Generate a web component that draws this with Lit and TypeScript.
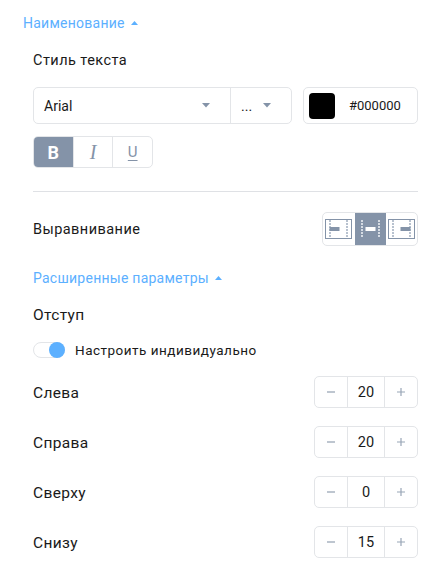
import { LitElement, html, css, svg } from "lit";
import { customElement } from "lit/decorators.js";

const caret = html`<svg class="caret" width="8" height="5" viewBox="0 0 8 5"><path d="M0 0h8L4 4.5z" fill="#8493a8"/></svg>`;
const up = html`<svg class="up" width="7" height="4" viewBox="0 0 7 4"><path d="M0 4h7L3.5 0z" fill="#5cb0ff"/></svg>`;
const minus = html`<svg width="8" height="8" viewBox="0 0 8 8"><path d="M0 4h8" stroke="#a9b3c1" stroke-width="1.500"/></svg>`;
const plus = html`<svg width="8" height="8" viewBox="0 0 8 8"><path d="M0 4h8M4 0v8" stroke="#98a5b6" stroke-width="1.200"/></svg>`;

function alignIcon(pos: "l" | "c" | "r", active: boolean) {
  const c = active ? "#ffffff" : "#8493a8";
  const d = active ? "#d5dbe3" : "#b8c2cf";
  const x = pos === "l" ? 4.5 : pos === "c" ? 8.5 : 12.5;
  const frame = active
    ? null
    : svg`<rect x="0.5" y="0.5" width="26" height="19" fill="none" stroke="#8493a8" stroke-width="1"/>`;
  return html`<svg width="27" height="20" viewBox="0 0 27 20">
    ${frame}
    <path d="M5 1v18M22 1v18" stroke="${d}" stroke-width="2" stroke-dasharray="2 1" fill="none"/>
    <rect x="${x}" y="8" width="10" height="4" fill="${c}"/>
  </svg>`;
}

@customElement("app-root")
export class AppRoot extends LitElement {
  static styles = css`
    :host {
      display: block;
      width: 447px;
      height: 575px;
      overflow: hidden;
      background: #fff;
      font-family: Roboto, "Liberation Sans", sans-serif;
      font-size: 14px;
      color: #1a1a1a;
      box-sizing: border-box;
    }
    .link {
      display: flex;
      align-items: center;
      gap: 6px;
      color: #5cb0ff;
      font-size: 14px;
      letter-spacing: 0.25px;
      line-height: 16px;
    }
    .head { padding: 15px 0 0 23px; }
    .body { padding: 0 29px 0 33px; }
    .title { font-size: 14.500px; letter-spacing: 0.45px; line-height: 18px; }
    .big { font-size: 15.500px; letter-spacing: 0.35px; }
    .style-title { margin-top: 21px; }
    .fontrow { display: flex; gap: 11px; margin-top: 17px; }
    .group {
      display: flex;
      border: 1px solid #e3e5e8;
      border-radius: 5px;
      box-sizing: border-box;
      background: #fff;
    }
    .selects { width: 259px; height: 37px; }
    .sel {
      display: flex;
      align-items: center;
      justify-content: space-between;
      box-sizing: border-box;
      padding: 0 20px 0 10px;
    }
    .sel.a { width: 197px; border-right: 1px solid #e3e5e8; }
    .sel.b { flex: 1; }
    .color { width: 115px; height: 37px; align-items: center; padding-left: 5px; gap: 14px; font-size: 13px; }
    .swatch { width: 26px; height: 26px; border-radius: 4px; background: #000; }
    .fmt { width: 120px; height: 32px; margin-top: 12px; overflow: hidden; }
    .fmt div {
      flex: 1;
      display: flex;
      align-items: center;
      justify-content: center;
      color: #8493a8;
      font-size: 18px;
    }
    .fmt div + div { border-left: 1px solid #e3e5e8; }
    .fmt .on { background: #8493a8; color: #fff; font-weight: 700; }
    .fmt .i { font-style: italic; font-family: "Liberation Serif", serif; font-size: 20px; }
    .fmt .u { text-decoration: underline; font-size: 15px; text-underline-offset: 3px; }
    .divider { height: 1px; background: #dfe1e5; margin-top: 23px; }
    .row { display: flex; align-items: center; justify-content: space-between; }
    .alignrow { margin-top: 20px; }
    .align { width: 96px; height: 34px; overflow: hidden; }
    .align div { flex: 1; display: flex; align-items: center; justify-content: center; }
    .align .on { background: #8493a8; flex: 0 0 31px; }
    .adv { margin-top: 24px; }
    .offset { margin-top: 20px; }
    .toggle-row { display: flex; align-items: center; gap: 10px; margin-top: 18px; font-size: 13.500px; letter-spacing: 0.5px; height: 16px; }
    .switch { position: relative; width: 32px; height: 16px; border: 1px solid #e3e5e8; border-radius: 9px; box-sizing: border-box; }
    .knob { position: absolute; right: -1px; top: -1px; width: 16px; height: 16px; border-radius: 50%; background: #5cb0ff; }
    .params { margin-top: 18px; display: flex; flex-direction: column; gap: 18px; }
    .stepper { width: 104px; height: 32px; }
    .stepper div { display: flex; align-items: center; justify-content: center; }
    .stepper .btn { width: 32px; }
    .stepper .val { flex: 1; border-left: 1px solid #e3e5e8; border-right: 1px solid #e3e5e8; font-size: 14.500px; }
    .label { padding-top: 2px; }
    .align-label { padding-top: 2px; }
  `;

  stepper(label: string, value: string) {
    return html`<div class="row">
      <span class="title big label">${label}</span>
      <div class="group stepper">
        <div class="btn">${minus}</div><div class="val">${value}</div><div class="btn">${plus}</div>
      </div>
    </div>`;
  }

  render() {
    return html`
      <div class="head link">Наименование ${up}</div>
      <div class="body">
        <div class="title style-title">Стиль текста</div>
        <div class="fontrow">
          <div class="group selects">
            <div class="sel a"><span>Arial</span>${caret}</div>
            <div class="sel b"><span>...</span>${caret}</div>
          </div>
          <div class="group color"><div class="swatch"></div><span>#000000</span></div>
        </div>
        <div class="group fmt">
          <div class="on">B</div><div class="i">I</div><div class="u">U</div>
        </div>
        <div class="divider"></div>
        <div class="row alignrow">
          <span class="title align-label">Выравнивание</span>
          <div class="group align">
            <div>${alignIcon("l", false)}</div>
            <div class="on">${alignIcon("c", true)}</div>
            <div>${alignIcon("r", false)}</div>
          </div>
        </div>
        <div class="link adv">Расширенные параметры ${up}</div>
        <div class="title big offset">Отступ</div>
        <div class="toggle-row"><div class="switch"><div class="knob"></div></div>Настроить индивидуально</div>
        <div class="params">
          ${this.stepper("Слева", "20")}
          ${this.stepper("Справа", "20")}
          ${this.stepper("Сверху", "0")}
          ${this.stepper("Снизу", "15")}
        </div>
      </div>
    `;
  }
}
